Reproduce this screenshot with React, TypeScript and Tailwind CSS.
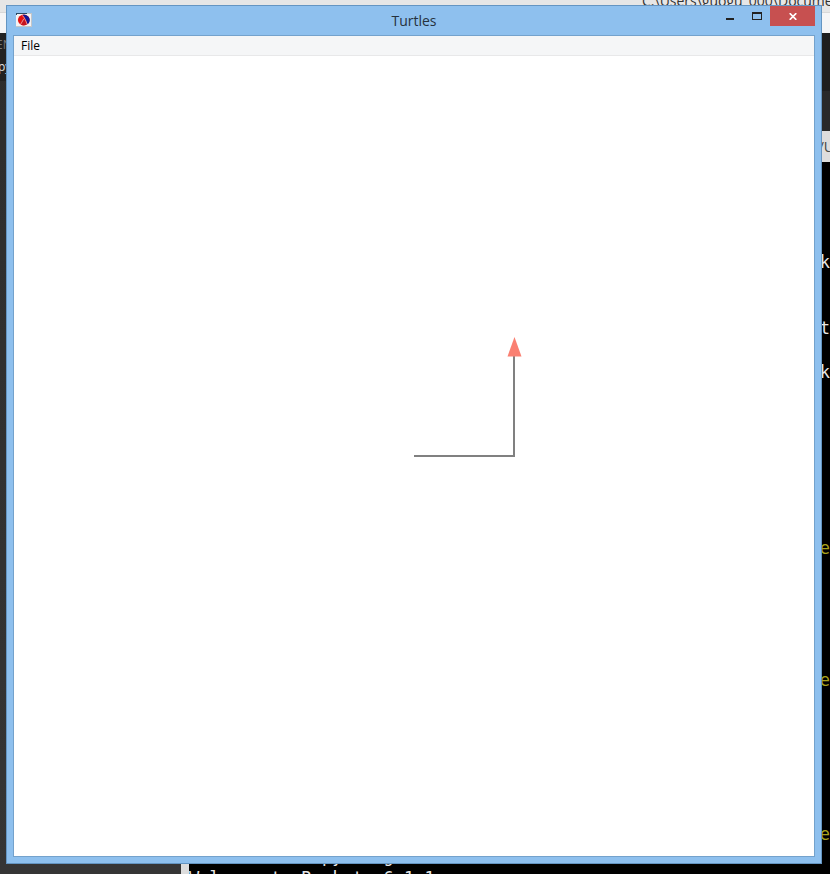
import React from "react";

type Line = { row: number; text: string; tone: string; side: "left" | "right" };

const consoleLines: Line[] = [
  { row: 4, text: "k", tone: "text-[#e8e8e8]", side: "right" },
  { row: 7, text: "t", tone: "text-[#e8e8e8]", side: "right" },
  { row: 9, text: "k", tone: "text-[#e8e8e8]", side: "right" },
  { row: 17, text: "e", tone: "text-[#a9a21c]", side: "right" },
  { row: 23, text: "e", tone: "text-[#a9a21c]", side: "right" },
  { row: 30, text: "e", tone: "text-[#a9a21c]", side: "right" },
  { row: 31, text: "             py    g", tone: "text-[#e8e8e8]", side: "left" },
  { row: 32, text: "Welcome to Racket v6.1.1.", tone: "text-[#e8e8e8]", side: "left" },
];

const rows = Array.from({ length: 33 }, (_, i) => consoleLines.find((l) => l.row === i));

function Backdrop() {
  return (
    <div className="absolute inset-0 flex flex-col overflow-hidden bg-[#333333]">
      <div className="h-3 shrink-0 bg-[#e6e6e6]">
        <p className="-mt-2 ml-[642px] whitespace-nowrap font-['Open_Sans',sans-serif] text-sm leading-[18px] text-[#333333]">
          C:\Users\guogu_000\Documents
        </p>
      </div>
      <div className="h-[21px] shrink-0 border-t border-[#d8d8d8] bg-[#f5f5f6]" />
      <div className="flex min-h-0 flex-1">
        <div className="w-[181px] shrink-0 bg-linear-to-b from-[#2d2d2d] to-[#353535] font-['Open_Sans',sans-serif] text-[11px] leading-[22px]">
          <div className="h-12 bg-[#222222]">
            <p className="-ml-1 text-xs leading-6 text-[#777777]">EN</p>
            <p className="-ml-0.5 text-xs leading-5 text-[#e0e0e0]">py</p>
          </div>
        </div>
        <div className="flex min-w-0 flex-1 flex-col">
          <div className="h-[58px] shrink-0 bg-[#1f1f1f]" />
          <div className="h-10 shrink-0 bg-[#292929]" />
          <div className="h-[31px] shrink-0 overflow-hidden bg-[#dddddd] text-right font-['Open_Sans',sans-serif] text-sm leading-8 text-[#444444]">
            <span className="-mr-1">/U</span>
          </div>
          <div className="min-h-0 flex-1 overflow-hidden border-l-8 border-[#dddddd] bg-black pt-px font-['DejaVu_Sans_Mono',monospace] text-[17px] leading-[22px]">
            {rows.map((line, i) => (
              <div
                key={i}
                className={
                  line?.side === "right" ? "h-[22px] whitespace-pre text-right" : "h-[22px] whitespace-pre"
                }
              >
                {line && <span className={line.tone}>{line.text}</span>}
              </div>
            ))}
          </div>
        </div>
      </div>
    </div>
  );
}

function RacketIcon() {
  return (
    <svg viewBox="0 0 16 14" className="h-3.5 w-4 shrink-0" aria-hidden="true">
      <rect width="16" height="14" fill="#f4f2f2" />
      <path d="M0 .5h11M.5 0v2" stroke="#2a4a66" strokeWidth="1" />
      <path d="M11 .5h5M15.5 0v14M0 13.5h16" stroke="#c3c6c9" strokeWidth="1" />
      <ellipse cx="7.8" cy="7" rx="5.9" ry="5.4" fill="#e31212" />
      <path d="M6.6 1.7C11 1.2 13.7 4 13.7 7C13.7 9 12.8 10.3 11.6 11.2C10.6 8 9 4 6.6 1.7Z" fill="#10189a" />
      <path d="M8 6.2L10.6 11.6Q8 13 5 11.7Z" fill="#c41420" />
      <path d="M6.2 2.4C8.6 4.4 9.9 8 11.2 11.4M7.8 5.8L4.6 11.4" stroke="#e9c9cd" strokeWidth=".7" fill="none" />
    </svg>
  );
}

function TitleBar() {
  return (
    <header className="grid h-[29px] grid-cols-[1fr_auto_1fr] items-start">
      <div className="pl-[9px] pt-[7px]">
        <RacketIcon />
      </div>
      <h1 className="font-['Open_Sans',sans-serif] text-sm leading-[29px] text-[#26323d]">Turtles</h1>
      <div className="flex justify-end pr-1.5">
        <button type="button" aria-label="Minimize" className="flex h-5 w-[26px] items-center justify-center">
          <svg viewBox="0 0 8 8" className="size-2" aria-hidden="true">
            <path d="M0 6h8v2H0z" fill="#222222" />
          </svg>
        </button>
        <button type="button" aria-label="Maximize" className="flex h-5 w-[27px] items-center justify-center">
          <svg viewBox="0 0 10 8" className="h-2 w-2.5" aria-hidden="true">
            <path d="M0 0h10v8H0zM1 2v5h8V2z" fill="#222222" fillRule="evenodd" />
          </svg>
        </button>
        <button type="button" aria-label="Close" className="flex h-5 w-[45px] items-center justify-center bg-[#c75050]">
          <svg viewBox="0 0 8 7" className="h-[7px] w-2" aria-hidden="true">
            <path d="M.7 .2L7.3 6.8M7.3 .2L.7 6.8" stroke="#ffffff" strokeWidth="1.7" />
          </svg>
        </button>
      </div>
    </header>
  );
}

function TurtleCanvas() {
  return (
    <main className="flex min-h-0 flex-1 items-center justify-center bg-white">
      <svg viewBox="0 0 800 800" className="size-[800px] shrink-0" role="img" aria-label="Turtle drawing">
        <path d="M400 400H500V300" fill="none" stroke="#808080" strokeWidth="2" />
        <path d="M500.5 281L507.5 300.5H493.5Z" fill="#fa8072" />
      </svg>
    </main>
  );
}

export default function App() {
  return (
    <div className="relative h-screen overflow-hidden">
      <Backdrop />
      <div className="relative flex h-full pb-2.5 pl-1.5 pr-2 pt-[5px]">
        <section className="flex min-w-0 flex-1 flex-col border border-[#6495c2] bg-[#8ec0ee]">
          <TitleBar />
          <div className="mx-1.5 mb-1.5 flex min-h-0 flex-1 flex-col border border-[#74a2cc]">
            <nav className="h-5 shrink-0 border-b border-[#e8e8e9] bg-[#f5f6f7] px-[7px]">
              <button type="button" className="block font-['Open_Sans',sans-serif] text-xs leading-5 text-black">
                File
              </button>
            </nav>
            <TurtleCanvas />
          </div>
        </section>
      </div>
    </div>
  );
}
